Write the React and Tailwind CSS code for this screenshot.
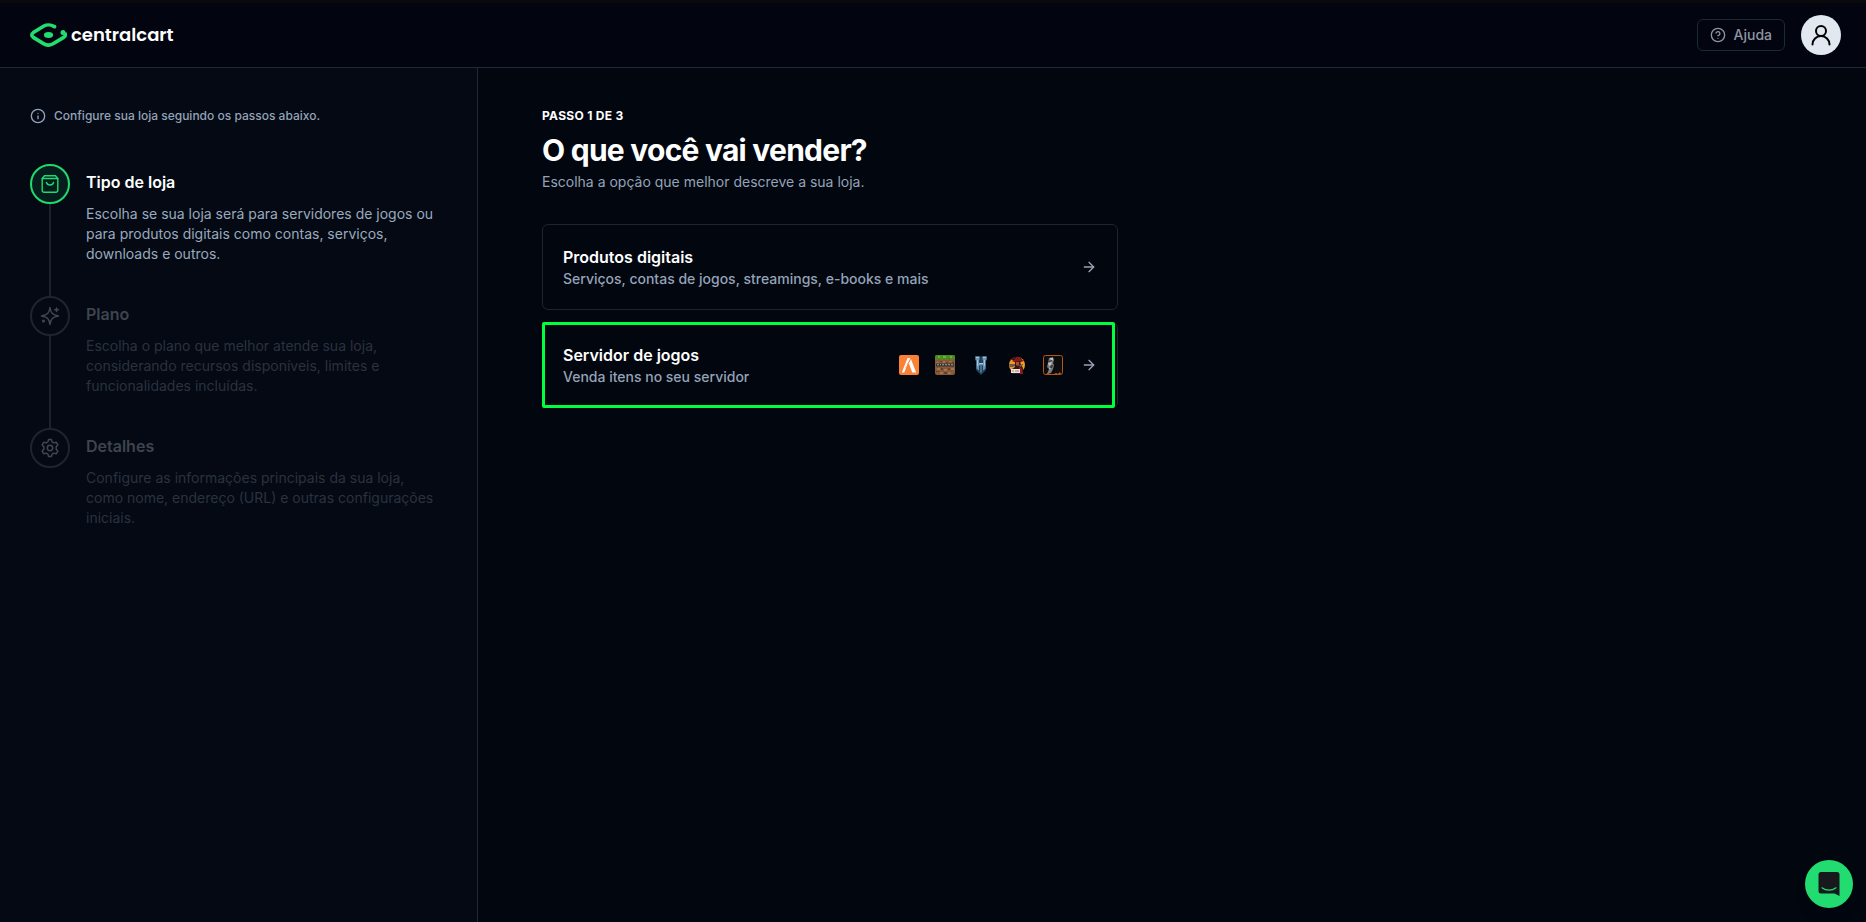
import { ArrowRight, CircleHelp, Info } from "lucide-react";
import clsx from "clsx";

const steps = [
  {
    id: "tipo",
    title: "Tipo de loja",
    description:
      "Escolha se sua loja será para servidores de jogos ou para produtos digitais como contas, serviços, downloads e outros.",
    icon: BagIcon,
  },
  {
    id: "plano",
    title: "Plano",
    description:
      "Escolha o plano que melhor atende sua loja, considerando recursos disponíveis, limites e funcionalidades incluídas.",
    icon: SparklesIcon,
  },
  {
    id: "detalhes",
    title: "Detalhes",
    description:
      "Configure as informações principais da sua loja, como nome, endereço (URL) e outras configurações iniciais.",
    icon: GearIcon,
  },
];

const options = [
  {
    id: "digital",
    title: "Produtos digitais",
    description: "Serviços, contas de jogos, streamings, e-books e mais",
    games: [],
  },
  {
    id: "servidor",
    title: "Servidor de jogos",
    description: "Venda itens no seu servidor",
    games: [FivemIcon, MinecraftIcon, HytaleIcon, RedmIcon, RustIcon],
    selected: true,
  },
];

function BagIcon() {
  return (
    <svg className="size-5" viewBox="0 0 20 20" fill="none" stroke="currentColor" strokeWidth="1.4" strokeLinecap="round" strokeLinejoin="round" aria-hidden="true">
      <path d="M2.200 4.500 4.500 1.700h11l2.300 2.800" />
      <path d="M2.200 4.500h15.600v11.800a2 2 0 0 1-2 2H4.200a2 2 0 0 1-2-2z" />
      <path d="M6.500 8.500a3.600 3.300 0 0 0 7 0" />
    </svg>
  );
}

function SparklesIcon() {
  return (
    <svg className="size-5" viewBox="0 0 20 20" fill="none" stroke="currentColor" strokeWidth="1.5" strokeLinecap="round" strokeLinejoin="round" aria-hidden="true">
      <path d="M10 1.500c.8 5.800 2.500 7.600 8.500 8.500-6 .9-7.700 2.700-8.500 8.500-.8-5.800-2.500-7.600-8.500-8.500 6-.9 7.700-2.700 8.500-8.500z" />
      <path d="M16.500 2v3.600M14.700 3.800h3.600" />
      <circle cx="3.500" cy="15" r=".8" />
    </svg>
  );
}

function GearIcon() {
  return (
    <svg className="size-5" viewBox="0 0 20 20" fill="none" stroke="currentColor" strokeWidth="1.5" strokeLinejoin="round" aria-hidden="true">
      <path d="M8.600 1.500h2.800l.7 2.400 1.700 1 2.400-.7 1.700 2.600-1.700 2v2.400l1.700 2-1.700 2.600-2.400-.7-1.700 1-.7 2.400H8.600l-.7-2.400-1.700-1-2.400.7-1.700-2.600 1.700-2V8.800l-1.700-2 1.700-2.600 2.400.7 1.700-1z" />
      <circle cx="10" cy="10" r="2.700" />
    </svg>
  );
}

function Logo() {
  return (
    <a href="#" className="flex items-center gap-1 text-white">
      <svg className="h-6 w-[37px]" viewBox="0 0 37 24" fill="none" aria-hidden="true">
        <path
          d="M24 3.500C21 1.500 16.500 1.500 13.500 3.200L3.300 9.600c-2 1.400-2 3.400 0 4.800l10.200 6.200c3 1.900 7 1.900 10 0l10.200-6.200c1.700-1.200 2-2.800 1-4.600"
          stroke="#22dd70"
          strokeWidth="3.600"
        />
        <circle cx="24.500" cy="3.700" r="1.900" fill="#22dd70" />
        <circle cx="33" cy="9.600" r="2.500" fill="#22dd70" />
        <ellipse cx="18.500" cy="12" rx="4.600" ry="3" fill="#22dd70" />
      </svg>
      <span className="font-[Poppins,'Inter',sans-serif] text-lg/6 font-semibold">centralcart</span>
    </a>
  );
}

function FivemIcon() {
  return (
    <svg className="size-5" viewBox="0 0 20 20" aria-hidden="true">
      <rect width="20" height="20" rx="2" fill="#fb8137" />
      <path d="M8.600 3h2.600l-6 14.500H2.800z" fill="#fff" />
      <path d="M9.900 8.200 11.900 4l5.300 13.500h-4L9.900 8.200z" fill="#fff" />
      <path d="m8 9.500 3-4M6.500 13l3-3.500" stroke="#fb8137" strokeWidth=".8" />
    </svg>
  );
}

function MinecraftIcon() {
  return (
    <svg className="size-5" viewBox="0 0 20 20" aria-hidden="true">
      <rect width="20" height="20" rx="2" fill="#855a38" />
      <path d="M0 2a2 2 0 0 1 2-2h16a2 2 0 0 1 2 2v2h-2v1h-3V3h-2v2h-3V4H8v1H5V3H3v2H0z" fill="#478d22" />
      <path d="M3 1h2v2H3zM8 1h3v2H8zM15 1h2v2h-2z" fill="#65b432" />
      <path d="M1 7h3v1H1zM8 6h2v2H8zM14 6h3v1h-3zM2 13h3v2H2zM9 14h3v2H9zM16 13h3v2h-3zM5 17h3v2H5zM13 17h3v2h-3z" fill="#a3744b" />
      <path d="M5 6h2v1H5zM11 7h2v1h-2zM17 7h2v1h-2zM6 13h2v2H6zM13 13h2v2h-2zM1 16h3v1H1zM9 17h3v2H9z" fill="#634129" />
      <path d="M1 8.500h18v3H1z" fill="#38322e" />
      <path d="M2 9.300h2v1H2zM5 9.300h1v1H5zM7 9.300h2v1H7zM10 9.300h2v1h-2zM13 9.300h2v1h-2zM16 9.300h2v1h-2z" fill="#aaa39c" />
    </svg>
  );
}

function HytaleIcon() {
  return (
    <svg className="size-5" viewBox="0 0 20 20" aria-hidden="true">
      <path d="M4 1h5l1 1 1-1h5v4l-1 1v9l-5 5-5-5V6L4 5z" fill="#24405b" />
      <path d="M4.500 1.500h4v3L8 5v3h4V5l-.5-.5v-3h4v3l-1 1v8l-2.500 2v-5H8v5l-2.500-2v-8l-1-1z" fill="#6c96b8" />
      <path d="M5 2h3v1H5zM12 2h3v1h-3zM6 5h1v6H6zM13 5h1v6h-1zM8 8h4v1H8z" fill="#a9c5d8" />
      <path d="M9 11h2v6l-1 1-1-1z" fill="#4a6e8c" />
    </svg>
  );
}

function RedmIcon() {
  return (
    <svg className="size-5" viewBox="0 0 20 20" aria-hidden="true">
      <circle cx="10" cy="10" r="8" fill="#f39b22" />
      <path d="M4 5a8 8 0 0 1 9-3l2 3H6z" fill="#3a1215" />
      <path d="m5 6 3-2 1-2h4l1 2 3 2-3 1H7z" fill="#811b19" />
      <path d="m8 7 5-1 1 4 2 3v6H5v-5l3-2z" fill="#351615" />
      <path d="M9 7h3v3l-1 1-2-1z" fill="#a85236" />
      <path d="M2 9h6v2l-2 1H3zM12 10l4-1v1l-3 2z" fill="#6b5a50" />
      <path d="m12 12 3 1 1 6h-3z" fill="#8e1c1c" />
      <path d="M4 14h9v4H4z" fill="#eee5dc" />
      <path d="M6 15v2M9 15v2M11 15v2" stroke="#5a3d36" strokeWidth=".6" />
    </svg>
  );
}

function RustIcon() {
  return (
    <svg className="size-5" viewBox="0 0 20 20" aria-hidden="true">
      <rect x=".5" y=".5" width="19" height="19" rx="2" fill="#0c0c0d" stroke="#b85617" />
      <path d="m6 3 4-1 1 3-1 3 1 2-1 4-2 4-4 1 2-5-2-2 1-4z" fill="#777b7e" />
      <path d="M7 3h3v2L8 6zM5 8l4-1-1 3-2 1zM6 13l2-1-1 3z" fill="#bec1c2" />
      <path d="m5 6 4-1v1L6 7zM8 10h2l-1 3H7z" fill="#353739" />
      <path d="m3 19 2-1 2 1h4l2-1 2 1 2-2 1 2z" fill="#c65b17" />
    </svg>
  );
}

function Header() {
  return (
    <header className="flex h-[68px] items-center justify-between border-t-[3px] border-b border-t-[#0a0a0a] border-b-[#1f2836] bg-[#020410] pr-[25px] pl-[30px]">
      <Logo />
      <div className="flex items-center gap-4">
        <button type="button" className="flex h-8 items-center gap-2 rounded-md border border-[#1c2937] px-3 text-sm font-medium text-[#9095a3]">
          <CircleHelp size={16} strokeWidth={2} aria-hidden="true" />
          Ajuda
        </button>
        <button type="button" aria-label="Conta" className="flex size-10 items-center justify-center rounded-full bg-[#e2e8f0] text-black">
          <svg className="size-6" viewBox="0 0 24 24" fill="none" stroke="currentColor" strokeWidth="2" strokeLinecap="round" aria-hidden="true">
            <circle cx="12" cy="8" r="5" />
            <path d="M3.500 21.500a8.500 8.500 0 0 1 17 0" />
          </svg>
        </button>
      </div>
    </header>
  );
}

function Sidebar() {
  return (
    <aside className="w-[478px] shrink-0 border-r border-[#1f2836] bg-[#040914] pt-10 pr-10 pl-[30px]">
      <p className="flex items-center gap-2 text-xs/4 font-medium text-[#94a3b8]">
        <Info size={16} strokeWidth={2} aria-hidden="true" />
        Configure sua loja seguindo os passos abaixo.
      </p>
      <ol className="mt-10">
        {steps.map((step, index) => {
          const active = index === 0;
          const Icon = step.icon;
          return (
            <li key={step.id} className="flex gap-4">
              <div className="flex flex-col items-center">
                <span
                  className={clsx(
                    "flex size-10 shrink-0 items-center justify-center rounded-full border-2",
                    active ? "border-[#1edb6c] bg-[#071d1d] text-[#1edb6c]" : "border-[#1f242e] text-[#41464f]"
                  )}
                >
                  <Icon />
                </span>
                {index < steps.length - 1 && <span className="w-0.5 grow bg-[#1d212b]" />}
              </div>
              <div className="pt-1.5 pb-8">
                <h2 className={clsx("text-base font-semibold", active ? "text-white" : "text-[#3f444d]")}>
                  {step.title}
                </h2>
                <p className={clsx("mt-2.5 text-sm", active ? "text-[#9aa9bd]" : "text-[#2b323e]")}>
                  {step.description}
                </p>
              </div>
            </li>
          );
        })}
      </ol>
    </aside>
  );
}

function OptionCard({ option }) {
  return (
    <button
      type="button"
      className="relative flex w-full items-center justify-between rounded-md border border-[#1c2431] p-5 text-left"
    >
      <span className="flex flex-col">
        <span className="text-base font-semibold text-white">{option.title}</span>
        <span className="text-sm font-medium text-[#94a3b8]">{option.description}</span>
      </span>
      <span className="flex items-center gap-[18px]">
        <span className="flex gap-4">
          {option.games.map((Game, index) => (
            <Game key={index} />
          ))}
        </span>
        <ArrowRight size={16} className="text-[#9ca3b4]" aria-hidden="true" />
      </span>
      {option.selected && (
        <span className="absolute -inset-y-px right-0.5 -left-px rounded-xs border-3 border-[#00ff3c]" />
      )}
    </button>
  );
}

export default function App() {
  return (
    <div className="flex min-h-screen flex-col bg-[#02060f] font-['Inter',sans-serif]">
      <Header />
      <div className="flex grow">
        <Sidebar />
        <main className="grow px-16 pt-10">
          <p className="text-xs/4 font-bold tracking-wide text-white">PASSO 1 DE 3</p>
          <h1 className="mt-2 text-3xl/9 font-bold tracking-tight text-white">O que você vai vender?</h1>
          <p className="mt-1 text-sm text-[#94a3b8]">Escolha a opção que melhor descreve a sua loja.</p>
          <div className="mt-8 flex max-w-xl flex-col gap-3">
            {options.map((option) => (
              <OptionCard key={option.id} option={option} />
            ))}
          </div>
        </main>
      </div>
      <button
        type="button"
        aria-label="Abrir chat"
        className="fixed right-[13px] bottom-[14px] flex size-12 items-center justify-center rounded-full bg-[#22dc71] shadow-lg"
      >
        <svg className="size-6" viewBox="0 0 24 24" fill="none" aria-hidden="true">
          <path d="M4 0h16a2.500 2.500 0 0 1 2.500 2.500V24L17.500 21.500H4A2.500 2.500 0 0 1 1.500 19V2.500A2.500 2.500 0 0 1 4 0z" fill="#17191d" />
          <path d="M5 15.800c4 3.200 10 3.200 14 0" stroke="#22dc71" strokeWidth="1.200" strokeLinecap="round" />
        </svg>
      </button>
    </div>
  );
}
